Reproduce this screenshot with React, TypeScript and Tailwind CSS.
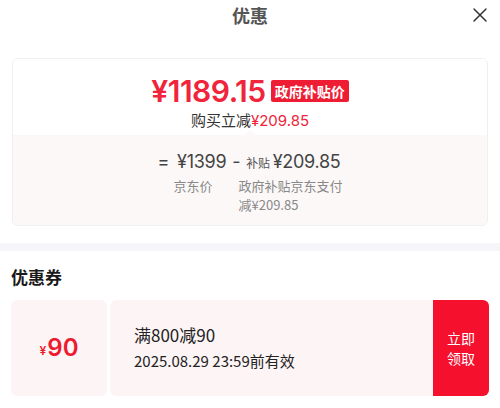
import React from 'react';

const CN = "font-['Noto_Sans_CJK_SC','Noto_Sans',sans-serif]";
const NUM = "font-['Inter','Noto_Sans_CJK_SC',sans-serif]";

function CloseIcon() {
  return (
    <svg width="16" height="16" viewBox="0 0 16 16" fill="none" stroke="#333" strokeWidth="1.5" strokeLinecap="round">
      <path d="M2 2 L14 14 M14 2 L2 14" />
    </svg>
  );
}

function PriceCard() {
  return (
    <div className="rounded-[6px] border border-[#efefef] overflow-hidden">
      <div className="h-[76px] flex flex-col items-center pt-[17px] bg-white">
        <div className="flex items-center h-[30px]">
          <span className={`${NUM} text-[#f0243a] font-semibold text-[30px] leading-none tracking-[-0.5px]`}>
            ¥1189.15
          </span>
          <span className={`${CN} ml-[5px] bg-[#ef1d33] text-white text-[14px] font-bold leading-none px-[4px] py-[4px] rounded-[2px]`}>
            政府补贴价
          </span>
        </div>
        <div className="mt-[4px] text-[15px] leading-[20px]">
          <span className={`${CN} text-[#333]`}>购买立减</span>
          <span className={`${NUM} text-[#f0243a]`}>¥209.85</span>
        </div>
      </div>
      <div className="relative bg-[#fcf8f8] h-[90px] pt-[13px]">
        <div className="absolute left-1/2 -top-[5px] -translate-x-1/2 w-0 h-0 border-x-[6px] border-x-transparent border-b-[5px] border-b-[#fcf8f8]" />
        <div className="flex justify-center">
          <div className="flex flex-col items-start">
            <div className="flex items-baseline text-[#444] tracking-[-0.3px]">
              <span className={`${NUM} text-[18px] mr-[8px]`}>=</span>
              <span className={`${NUM} text-[18px] leading-[24px]`}>¥1399</span>
              <span className={`${NUM} text-[18px] mx-[6px]`}>-</span>
              <span className={`${CN} text-[12px] text-[#555] mr-[3px]`}>补贴</span>
              <span className={`${NUM} text-[18px] leading-[24px]`}>¥209.85</span>
            </div>
            <div className={`${CN} flex text-[13px] leading-[19px] text-[#888] mt-[1px]`}>
              <span className="ml-[16px] w-[65px]">京东价</span>
              <span className="w-[104px]">
                政府补贴京东支付
                <br />
                减¥209.85
              </span>
            </div>
          </div>
        </div>
      </div>
    </div>
  );
}

function Coupon() {
  return (
    <div className="relative flex h-[96px]">
      <div className={`w-[96px] bg-[#fdf4f5] rounded-[6px] flex items-center justify-center text-[#ec1b30] ${NUM}`}>
        <span className="text-[12px] font-semibold mt-[6px] mr-[1px]">¥</span>
        <span className="text-[24px] font-semibold">90</span>
      </div>
      <div className="relative w-[3px] bg-white">
        <div className="absolute left-1/2 -translate-x-1/2 -top-[3px] w-[7px] h-[7px] rounded-full bg-white" />
        <div className="absolute left-1/2 -translate-x-1/2 -bottom-[3px] w-[7px] h-[7px] rounded-full bg-white" />
      </div>
      <div className="flex-1 bg-[#fdf4f5] rounded-l-[6px] flex flex-col justify-center pl-[24px] pb-[2px]">
        <span className={`${CN} text-[17px] leading-[24px] text-[#222]`}>满800减90</span>
        <span className={`${CN} text-[15px] leading-[22px] text-[#222] mt-[3px]`}>2025.08.29 23:59前有效</span>
      </div>
      <div className={`${CN} w-[56px] bg-[#f5102e] rounded-r-[6px] flex flex-col items-center justify-center text-white text-[14px] leading-[20px]`}>
        <span>立即</span>
        <span>领取</span>
      </div>
    </div>
  );
}

export default function App() {
  return (
    <div className={`w-[500px] h-[408px] bg-white overflow-hidden ${CN}`}>
      <div className="relative h-[30px] flex items-center justify-center">
        <span className="text-[18px] font-bold text-[#555] leading-none">优惠</span>
        <div className="absolute right-[12px] top-[7px]">
          <CloseIcon />
        </div>
      </div>
      <div className="px-[12px] pt-[28px]">
        <PriceCard />
      </div>
      <div className="mt-[17px] h-[8px] bg-[#f6f6fa]" />
      <div className="px-[11px]">
        <div className="pt-[14px] text-[17px] font-bold text-[#1a1a1a] leading-[24px]">优惠券</div>
        <div className="mt-[11px]">
          <Coupon />
        </div>
      </div>
    </div>
  );
}
